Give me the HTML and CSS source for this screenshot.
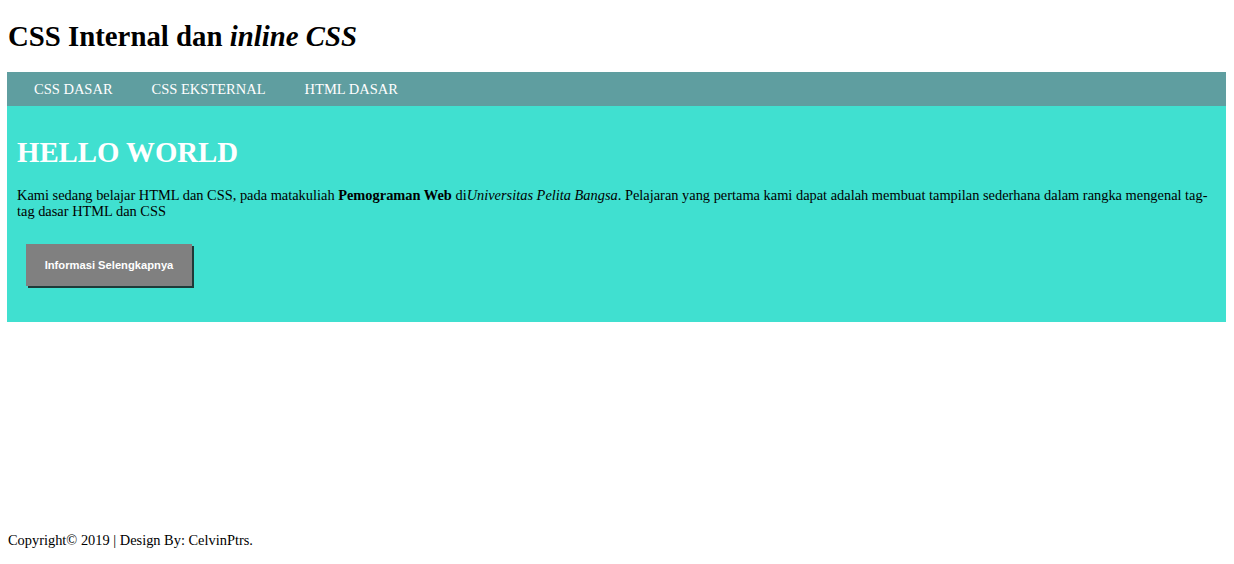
FILE: index.html
```html
<!DOCTYPE html>
<html>
<head>
<meta charset="utf-8">
<title>CSS Internal dan inline CSS</title>
<link rel="stylesheet" href="styles.css">
</head>
<body>
<header class="page-header">
  <h1 class="title">CSS Internal dan <i>inline CSS</i></h1>
</header>
<nav class="menu">
  <a class="menu-link" href="#">CSS DASAR</a>
  <a class="menu-link" href="#">CSS EKSTERNAL</a>
  <a class="menu-link" href="#">HTML DASAR</a>
</nav>
<section class="hero">
  <h2 class="hero-title">HELLO WORLD</h2>
  <p class="hero-text">Kami sedang belajar HTML dan CSS, pada matakuliah <b>Pemograman Web</b> di<i>Universitas Pelita Bangsa</i>. Pelajaran yang pertama kami dapat adalah membuat tampilan sederhana dalam rangka mengenal tag-tag dasar HTML dan CSS</p>
  <a class="button" href="#">Informasi Selengkapnya</a>
</section>
<footer class="footer">Copyright&copy; 2019 | Design By: CelvinPtrs.</footer>
</body>
</html>
```

FILE: styles.css
```css
html, body {
  background: #ffffff;
}
body {
  margin: 0 8px 0 7px;
  font-family: "Liberation Serif", "Times New Roman", serif;
  color: #000;
  min-height: 564px;
  display: flex;
  flex-direction: column;
}
.page-header {
  flex-shrink: 0;
  padding: 20px 0 0 1px;
  height: 72px;
  box-sizing: border-box;
}
.title {
  margin: 0;
  font-size: 28.8px;
  line-height: 32px;
  font-weight: bold;
}
.menu {
  flex-shrink: 0;
  background: #5f9ea0;
  height: 34px;
  display: flex;
  align-items: center;
  padding-left: 27px;
  gap: 39px;
}
.menu-link {
  color: #ffffff;
  text-decoration: none;
  font-size: 14.5px;
}
.hero {
  flex-shrink: 0;
  background: #40e0d0;
  height: 216px;
  box-sizing: border-box;
  padding: 30px 14px 0 10px;
}
.hero-title {
  margin: 0;
  color: #ffffff;
  font-size: 28.8px;
  line-height: 32px;
  font-weight: bold;
}
.hero-text {
  margin: 19px 0 0 0;
  font-size: 14.4px;
  line-height: 16px;
}
.button {
  display: inline-block;
  margin: 25px 0 0 9px;
  width: 166px;
  height: 42px;
  line-height: 42px;
  text-align: center;
  background: #808080;
  color: #ffffff;
  text-decoration: none;
  font-family: "Liberation Sans", Arial, sans-serif;
  font-weight: bold;
  font-size: 11.2px;
  box-shadow: 2px 2px 0 #1f3a38;
}
.footer {
  margin-top: auto;
  padding: 0 0 16px 1px;
  font-size: 14.4px;
  line-height: 16px;
}
```
